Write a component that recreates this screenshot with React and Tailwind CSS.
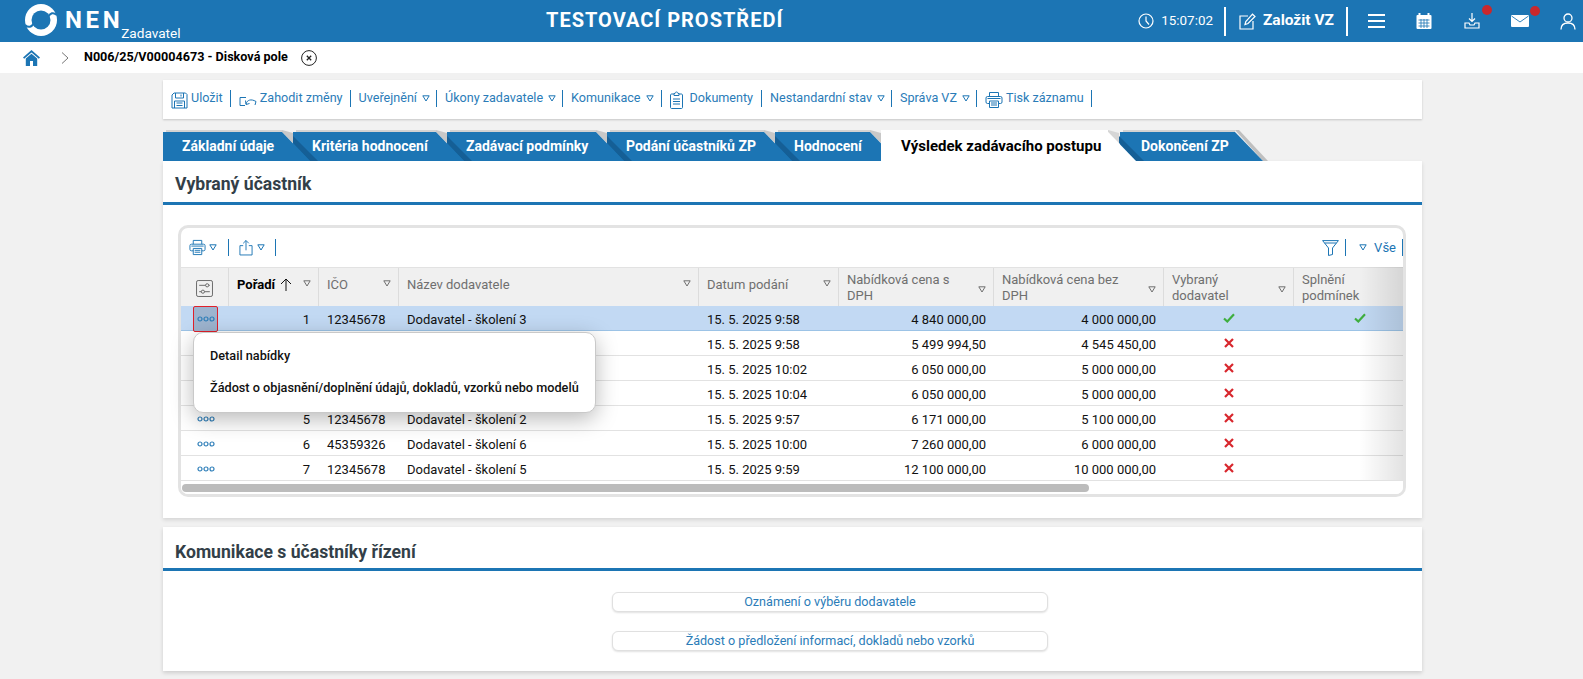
import React from 'react';

const BLUE = '#1c75b4';

const Caret = ({ className = '' }) => (
  <svg width="8" height="7" viewBox="0 0 8 7" className={`inline-block shrink-0 ${className}`}>
    <path d="M0.8 0.8H7.2L4 6Z" fill="none" stroke="currentColor" strokeWidth="1" />
  </svg>
);

const Sep = () => <span className="block w-px h-[17px] bg-[#1c75b4] shrink-0" />;

const PrinterIcon = ({ size = 18 }) => (
  <svg width={size} height={size} viewBox="0 0 18 18" fill="none" stroke={BLUE} strokeWidth="1">
    <path d="M4.5 5.5V1.5H13.5V5.5" />
    <rect x="1" y="5.5" width="16" height="7" rx="1.5" />
    <path d="M4.5 10H13.5V16.5H4.5Z" fill="#fff" />
    <path d="M6 12H12M6 14H12" />
    <path d="M2.5 7.5H15.5" />
  </svg>
);

const MiniDots = () => (
  <svg width="18" height="6" viewBox="0 0 18 6" fill="none" stroke="#2f7fb9" strokeWidth="1.2">
    <circle cx="3" cy="3" r="2" />
    <circle cx="9" cy="3" r="2" />
    <circle cx="15" cy="3" r="2" />
  </svg>
);

const Check = () => (
  <svg width="12" height="10" viewBox="0 0 12 10" fill="none" stroke="#3fae3f" strokeWidth="2.2">
    <path d="M1 5.5L4.3 8.5L11 1.2" />
  </svg>
);

const Cross = () => (
  <svg width="10" height="10" viewBox="0 0 10 10" fill="none" stroke="#d8262c" strokeWidth="2.2">
    <path d="M1 1L9 9M9 1L1 9" />
  </svg>
);

const toolbarItems = [
  { label: 'Uložit', icon: 'save', pad: 'pr-[7px]' },
  { label: 'Zahodit změny', icon: 'undo', pad: 'pr-[7px]' },
  { label: 'Uveřejnění', caret: true, pad: 'pr-[6px]' },
  { label: 'Úkony zadavatele', caret: true, pad: 'pr-[6px]' },
  { label: 'Komunikace', caret: true, pad: 'pr-[7px]' },
  { label: 'Dokumenty', icon: 'doc', pad: 'pr-[8px]' },
  { label: 'Nestandardní stav', caret: true, pad: 'pr-[6px]' },
  { label: 'Správa VZ', caret: true, pad: 'pr-[6px]' },
  { label: 'Tisk záznamu', icon: 'print', pad: 'pr-[7px]' },
];

const ToolIcon = ({ type }) => {
  if (type === 'save')
    return (
      <svg width="17" height="17" viewBox="0 0 17 17" fill="none" stroke={BLUE} strokeWidth="1" className="mt-[3px]">
        <path d="M1 3L3 1H14.5L16 2.5V16H1Z" />
        <path d="M4.5 1V6H12.5V1M10 2.5V4.5" />
        <path d="M3.5 16V9H13.5V16M5.5 11H11.5M5.5 13.5H11.5" />
      </svg>
    );
  if (type === 'undo')
    return (
      <svg width="18" height="14" viewBox="0 0 18 14" fill="none" stroke={BLUE} strokeWidth="1" className="mt-[3px]">
        <path d="M1 4.5H7M1 4.5V12.5H6" />
        <path d="M7 11C8 7 12 5.5 17 8.5L16 12" />
        <path d="M6.5 7.5L7 11.5L10.5 10.5" />
      </svg>
    );
  if (type === 'doc')
    return (
      <svg width="13" height="18" viewBox="0 0 13 18" fill="none" stroke={BLUE} strokeWidth="1" className="mt-[3px] mr-[4px]">
        <path d="M4 3H1.5C1 3 .5 3.5 .5 4V16.5C.5 17 1 17.5 1.5 17.5H11.5C12 17.5 12.5 17 12.5 16.5V4C12.5 3.5 12 3 11.5 3H9" />
        <path d="M4 4.5V2.5H5C5 .5 8 .5 8 2.5H9V4.5Z" />
        <path d="M3 8H10M3 10.5H10M3 13H10" />
      </svg>
    );
  return (
    <span className="mt-[3px] flex">
      <PrinterIcon />
    </span>
  );
};

const tabs = [
  { label: 'Základní údaje', w: 'w-[130px]', z: 'z-[7]' },
  { label: 'Kritéria hodnocení', w: 'w-[154px]', z: 'z-[6]' },
  { label: 'Zadávací podmínky', w: 'w-[160px]', z: 'z-[5]' },
  { label: 'Podání účastníků ZP', w: 'w-[168px]', z: 'z-[4]' },
  { label: 'Hodnocení', w: 'w-[106px]', z: 'z-[3]' },
  { label: 'Výsledek zadávacího postupu', w: 'w-[239px]', z: 'z-[8]', active: true },
  { label: 'Dokončení ZP', w: 'w-[143px]', z: 'z-[1]', last: true },
];

const Tab = ({ label, w, z, active, last }) => (
  <div className={`relative h-[30px] ${w} ${z} shrink-0`}>
    {active ? (
      <div className="absolute left-0 right-[12px] bottom-0 h-[31px] bg-white" />
    ) : (
      <>
        <div className={`absolute left-0 bottom-0 h-[29px] bg-[#1c75b4] ${last ? 'right-[28px]' : 'right-[11px]'}`} />
        <div className={`absolute left-[3px] bottom-[29px] h-[2px] bg-[#d2d2d2] ${last ? 'right-[28px]' : 'right-[11px]'}`} />
      </>
    )}
    {/* slanted end of the tab, with its shadow */}
    <svg
      width="40"
      height="30"
      viewBox="0 0 40 30"
      className={`absolute bottom-0 overflow-visible ${active ? 'right-[-28px]' : last ? 'right-[-12px]' : 'right-[-29px]'}`}
    >
      {last ? (
        <path d="M0 -1L4 -1L33 30H28Z" fill="#bfbfbf" />
      ) : (
        <>
          <path d="M0 -1L11 2L11 12L0 1Z" fill={active ? '#d6d6d6' : '#c8c8c8'} />
          <path d="M11 12L28 30H36L11 5Z" fill="#155f96" />
        </>
      )}
      <path d="M0 1L28 30H0Z" fill={active ? '#fff' : BLUE} />
    </svg>
    <span
      className={`absolute top-[4px] whitespace-nowrap font-bold leading-[22px] ${
        active ? 'left-[20px] text-[15px] text-black' : 'text-[14px] text-white'
      } ${last ? 'left-[21px]' : active ? '' : 'left-[19px]'}`}
    >
      {label}
    </span>
  </div>
);

const columns = [
  { label: ['Pořadí'], w: 'w-[90px]', strong: true, sort: true },
  { label: ['IČO'], w: 'w-[80px]' },
  { label: ['Název dodavatele'], w: 'w-[300px]' },
  { label: ['Datum podání'], w: 'w-[140px]' },
  { label: ['Nabídková cena s', 'DPH'], w: 'w-[155px]', low: true },
  { label: ['Nabídková cena bez', 'DPH'], w: 'w-[170px]', low: true },
  { label: ['Vybraný', 'dodavatel'], w: 'w-[130px]', low: true },
  { label: ['Splnění', 'podmínek'], w: 'w-[129px]', noCaret: true },
];

// rows 2-4 are partly behind the open menu, their first cells are not visible
const rows = [
  ['1', '12345678', 'Dodavatel - školení 3', '15. 5. 2025 9:58', '4 840 000,00', '4 000 000,00', true, true],
  ['', '', '', '15. 5. 2025 9:58', '5 499 994,50', '4 545 450,00', false],
  ['', '', '', '15. 5. 2025 10:02', '6 050 000,00', '5 000 000,00', false],
  ['', '', '', '15. 5. 2025 10:04', '6 050 000,00', '5 000 000,00', false],
  ['5', '12345678', 'Dodavatel - školení 2', '15. 5. 2025 9:57', '6 171 000,00', '5 100 000,00', false],
  ['6', '45359326', 'Dodavatel - školení 6', '15. 5. 2025 10:00', '7 260 000,00', '6 000 000,00', false],
  ['7', '12345678', 'Dodavatel - školení 5', '15. 5. 2025 9:59', '12 100 000,00', '10 000 000,00', false],
];

const Row = ({ row, index }) => {
  const selected = index === 0;
  return (
    <div
      className={`flex h-[25px] items-center pt-[4px] text-[13px] text-[#111] border-b shrink-0 ${
        selected ? 'bg-[#c2d9f3] border-[#9cc3e6]' : 'bg-white border-[#e2e2e2]'
      }`}
    >
      <div className="w-[48px] h-full flex items-center justify-center shrink-0 relative">
        {selected ? (
          <span className="w-[25px] h-[26px] mt-[-3px] ml-[1px] bg-[#9db4cf] border border-[#e0202a] rounded-[2px] flex items-center justify-center">
            <MiniDots />
          </span>
        ) : (
          <span className="ml-[1px] mt-[-3px] flex">
            <MiniDots />
          </span>
        )}
      </div>
      <div className="w-[90px] pr-[9px] text-right shrink-0">{row[0]}</div>
      <div className="w-[80px] pl-[8px] shrink-0">{row[1]}</div>
      <div className="w-[300px] pl-[8px] shrink-0">{row[2]}</div>
      <div className="w-[140px] pl-[8px] shrink-0">{row[3]}</div>
      <div className="w-[155px] pr-[8px] text-right shrink-0">{row[4]}</div>
      <div className="w-[170px] pr-[8px] text-right shrink-0">{row[5]}</div>
      <div className="w-[130px] flex justify-center pb-[4px] shrink-0">{row[6] ? <Check /> : <Cross />}</div>
      <div className="w-[129px] pl-[2px] flex justify-center pb-[4px] shrink-0">{row[7] && <Check />}</div>
    </div>
  );
};

const SectionTitle = ({ children, className = '' }) => (
  <h2 className={`text-[17.6px] font-bold text-[#333f48] pl-[12px] leading-[24px] border-b-[3px] border-[#1c75b4] ${className}`}>
    {children}
  </h2>
);

export default function App() {
  return (
    <div className="h-[679px] overflow-hidden bg-[#f1f1f1] font-['Roboto',sans-serif]">
      {/* top bar */}
      <header className="h-[42px] bg-[#1c75b4] flex items-center text-white">
        <div className="w-[546px] shrink-0 flex items-center">
          <svg width="32" height="32" viewBox="0 0 32 32" className="ml-[25px] mb-[3px] shrink-0">
            <circle cx="16" cy="16" r="16" fill="#fff" />
            <circle cx="16" cy="16" r="9.5" fill={BLUE} />
            <path d="M32 11C28 7.5 25.5 9.5 23 12.5" fill="none" stroke={BLUE} strokeWidth="2" />
            <path d="M0 21C4 24.5 6.5 22.5 9 19.5" fill="none" stroke={BLUE} strokeWidth="2" />
          </svg>
          <span className="ml-[8px] mb-[3px] text-[24px] font-bold tracking-[0.15em] leading-none">NEN</span>
          <span className="ml-[-2px] mt-[25px] text-[13.6px] leading-none">Zadavatel</span>
        </div>
        <span className="text-[20px] font-bold tracking-[0.05em] leading-[24px] mb-[2px] whitespace-nowrap">TESTOVACÍ PROSTŘEDÍ</span>

        <div className="ml-auto flex items-center h-full">
          <svg width="16" height="16" viewBox="0 0 16 16" fill="none" stroke="#fff" strokeWidth="1.2">
            <circle cx="8" cy="8" r="7" />
            <path d="M8 3.5V8L11 11.5" />
          </svg>
          <span className="ml-[7px] text-[13.4px] leading-none">15:07:02</span>
          <span className="ml-[11px] w-[2px] h-[29px] bg-white" />
          <svg width="17" height="17" viewBox="0 0 17 17" fill="none" stroke="#fff" strokeWidth="1.2" className="ml-[13px]">
            <path d="M9 3H1V16H14V8" />
            <path d="M6 11.5L6.8 8.5L13.5 1.2L16 3.5L9 10.5Z" />
          </svg>
          <span className="ml-[7px] text-[15.5px] font-bold leading-none">Založit VZ</span>
          <span className="ml-[12px] w-[2px] h-[29px] bg-white" />
          <svg width="17" height="14" viewBox="0 0 17 14" fill="#fff" className="ml-[20px]">
            <rect width="17" height="2" />
            <rect y="6" width="17" height="2" />
            <rect y="12" width="17" height="2" />
          </svg>
          <svg width="16" height="16" viewBox="0 0 16 16" className="ml-[31px]">
            <rect x="0.5" y="2" width="15" height="14" rx="1" fill="#fff" />
            <path d="M3.5 0V3M12.5 0V3" stroke="#fff" strokeWidth="2" />
            <path d="M2.5 7H13.5M2.5 10H13.5M2.5 13H13.5M5 6V15M8 6V15M11 6V15" stroke={BLUE} strokeWidth="0.8" />
          </svg>
          <div className="relative ml-[32px] flex">
            <svg width="16" height="16" viewBox="0 0 16 16" fill="none" stroke="#fff" strokeWidth="1.2">
              <path d="M8 0V8M5 5.5L8 8.5L11 5.5" />
              <path d="M1 10H5L6 12H10L11 10H15V15H1Z" />
            </svg>
            <span className="absolute left-[18px] top-[-8px] w-[10px] h-[10px] rounded-full bg-[#c9282d]" />
          </div>
          <div className="relative ml-[31px] flex">
            <svg width="18" height="12" viewBox="0 0 18 12">
              <rect width="18" height="12" rx="1" fill="#fff" />
              <path d="M0.5 1L9 7L17.5 1" fill="none" stroke={BLUE} strokeWidth="0.9" />
            </svg>
            <span className="absolute left-[19px] top-[-9px] w-[10px] h-[10px] rounded-full bg-[#c9282d]" />
          </div>
          <svg width="16" height="17" viewBox="0 0 16 17" fill="none" stroke="#fff" strokeWidth="1.3" className="ml-[31px] mr-[7px]">
            <circle cx="8" cy="5" r="4" />
            <path d="M1 16.5C1 12 4 10 8 10C12 10 15 12 15 16.5" />
          </svg>
        </div>
      </header>

      {/* breadcrumb */}
      <div className="h-[31px] bg-white flex items-center">
        <svg width="17" height="16" viewBox="0 0 17 16" className="ml-[23px]">
          <path d="M8.5 0L17 7.5L15.8 8.8L8.5 2.5L1.2 8.8L0 7.5Z" fill={BLUE} />
          <path d="M2.8 8.5L8.5 3.8L14.2 8.5V16H10V11H7V16H2.8Z" fill={BLUE} />
        </svg>
        <svg width="8" height="12" viewBox="0 0 8 12" fill="none" stroke="#777" strokeWidth="1" className="ml-[21px]">
          <path d="M1 .5L7 6L1 11.5" />
        </svg>
        <span className="ml-[15px] text-[12.6px] font-bold text-black">N006/25/V00004673 - Disková pole</span>
        <svg width="16" height="16" viewBox="0 0 16 16" fill="none" stroke="#222" strokeWidth="1" className="ml-[13px]">
          <circle cx="8" cy="8" r="7.4" />
          <path d="M5.8 5.8L10.2 10.2M10.2 5.8L5.8 10.2" strokeWidth="1.3" />
        </svg>
      </div>

      <main className="ml-[163px] w-[1259px]">
        {/* action bar */}
        <div className="mt-[7px] h-[39px] bg-white shadow-[0_1px_2px_rgba(0,0,0,0.18)] flex items-center pl-[8px] pb-[2px] text-[12.6px] text-[#2a7cb8]">
          {toolbarItems.map((item) => (
            <React.Fragment key={item.label}>
              <div className={`flex items-center gap-[3px] ${item.pad}`}>
                {item.icon && <ToolIcon type={item.icon} />}
                <span className="whitespace-nowrap">{item.label}</span>
                {item.caret && <Caret className="ml-[2px] text-[#1c75b4]" />}
              </div>
              <Sep />
              <span className="w-[8px] shrink-0" />
            </React.Fragment>
          ))}
        </div>

        {/* tabs */}
        <div className="mt-[12px] flex relative z-10">
          {tabs.map((tab) => (
            <Tab key={tab.label} {...tab} />
          ))}
        </div>

        {/* selected participant */}
        <section className="relative h-[357px] bg-white shadow-[0_2px_4px_rgba(0,0,0,0.12)]">
          <SectionTitle className="pt-[11px] h-[44px]">Vybraný účastník</SectionTitle>

          <div className="relative mx-[15px] mt-[20px] h-[272px] w-[1228px] overflow-hidden rounded-[10px] border-[3px] border-[#e3e3e3] flex flex-col">
            <div className="h-[39px] shrink-0 flex items-center pl-[8px] pr-0 text-[#1c75b4]">
              <PrinterIcon size={17} />
              <Caret className="ml-[3px]" />
              <span className="ml-[11px]"><Sep /></span>
              <svg width="14" height="17" viewBox="0 0 15 17" fill="none" stroke={BLUE} strokeWidth="1" className="ml-[10px]">
                <path d="M4.5 6.5H1V16.5H14V6.5H10.5" />
                <path d="M7.5 11.5V1M4.5 4L7.5 1L10.5 4" />
              </svg>
              <Caret className="ml-[4px]" />
              <span className="ml-[10px]"><Sep /></span>
              <svg width="17" height="16" viewBox="0 0 17 16" fill="none" stroke={BLUE} strokeWidth="1" className="ml-auto">
                <path d="M.6 .6H16.4L10.5 8V14.5L6.5 15.5V8Z" />
                <path d="M2.6 3H14.4" />
              </svg>
              <span className="ml-[6px]"><Sep /></span>
              <Caret className="ml-[13px]" />
              <span className="ml-[7px] text-[13px] leading-none">Vše</span>
              <span className="ml-[6px]"><Sep /></span>
            </div>

            {/* grid header */}
            <div className="flex h-[39px] shrink-0 bg-[#f0f0f0] border-t border-[#e2e2e2] text-[13px] leading-[16px] text-[#6f6f6f]">
              <div className="w-[48px] shrink-0 flex items-center justify-center border-r border-[#dcdcdc]">
                <svg width="17" height="17" viewBox="0 0 16 16" fill="none" stroke="#666" strokeWidth="0.9" className="mt-[2px]">
                  <rect x=".5" y=".5" width="15" height="15" rx="1.5" />
                  <path d="M3 5H9M12 5H13M3 11H5M8 11H13" />
                  <circle cx="10.5" cy="5" r="1.5" />
                  <circle cx="6.5" cy="11" r="1.5" />
                </svg>
              </div>
              {columns.map((col) => (
                <div
                  key={col.label[0]}
                  className={`${col.w} shrink-0 flex items-start pl-[8px] pr-[7px] border-r border-[#dcdcdc] ${
                    col.label.length > 1 ? 'pt-[4px]' : 'pt-[9px]'
                  } ${col.strong ? 'font-bold text-black' : ''}`}
                >
                  <span className="whitespace-nowrap">
                    {col.label.map((line) => (
                      <span key={line} className="block">{line}</span>
                    ))}
                  </span>
                  {col.sort && (
                    <svg width="12" height="13" viewBox="0 0 12 13" fill="none" stroke="#111" strokeWidth="1" className="ml-[5px] mt-[1px]">
                      <path d="M6 13V1M1 6L6 1L11 6" />
                    </svg>
                  )}
                  {!col.noCaret && (
                    <Caret className={`ml-auto text-[#6f6f6f] ${col.low ? 'mt-[14px]' : 'mt-[3px]'}`} />
                  )}
                </div>
              ))}
            </div>

            {rows.map((row, i) => (
              <Row key={i} row={row} index={i} />
            ))}

            {/* horizontal scrollbar */}
            <div className="flex-1 bg-white pt-[3px] pl-[1px]">
              <div className="h-[8px] w-[907px] rounded-full bg-[#bcbcbc]" />
            </div>

            {/* right edge fade of the scrollable grid */}
            <div className="absolute right-0 top-[39px] bottom-[14px] w-[44px] bg-gradient-to-r from-transparent to-[#0000001c]" />
          </div>

          {/* row action menu */}
          <div className="absolute left-[30px] top-[171px] w-[403px] h-[81px] rounded-[10px] bg-white border border-[#c9c9c9] shadow-[0_6px_22px_rgba(0,0,0,0.28)] pl-[16px] pt-[15px] text-[12.7px] font-medium text-[#111] leading-[16px]">
            <p>Detail nabídky</p>
            <p className="mt-[16px] whitespace-nowrap">Žádost o objasnění/doplnění údajů, dokladů, vzorků nebo modelů</p>
          </div>
        </section>

        {/* communication */}
        <section className="mt-[9px] h-[144px] bg-white shadow-[0_2px_4px_rgba(0,0,0,0.15)] flex flex-col">
          <SectionTitle className="w-full pt-[13px] h-[44px]">Komunikace s účastníky řízení</SectionTitle>
          <button className="mt-[21px] ml-[449px] w-[436px] h-[20px] rounded-[6px] border border-[#e0e0e0] bg-white shadow-[0_1px_2px_rgba(0,0,0,0.12)] text-[12.6px] leading-none text-[#2a7cb8]">
            Oznámení o výběru dodavatele
          </button>
          <button className="mt-[19px] ml-[449px] w-[436px] h-[20px] rounded-[6px] border border-[#e0e0e0] bg-white shadow-[0_1px_2px_rgba(0,0,0,0.12)] text-[12.6px] leading-none text-[#2a7cb8]">
            Žádost o předložení informací, dokladů nebo vzorků
          </button>
        </section>
      </main>
    </div>
  );
}
